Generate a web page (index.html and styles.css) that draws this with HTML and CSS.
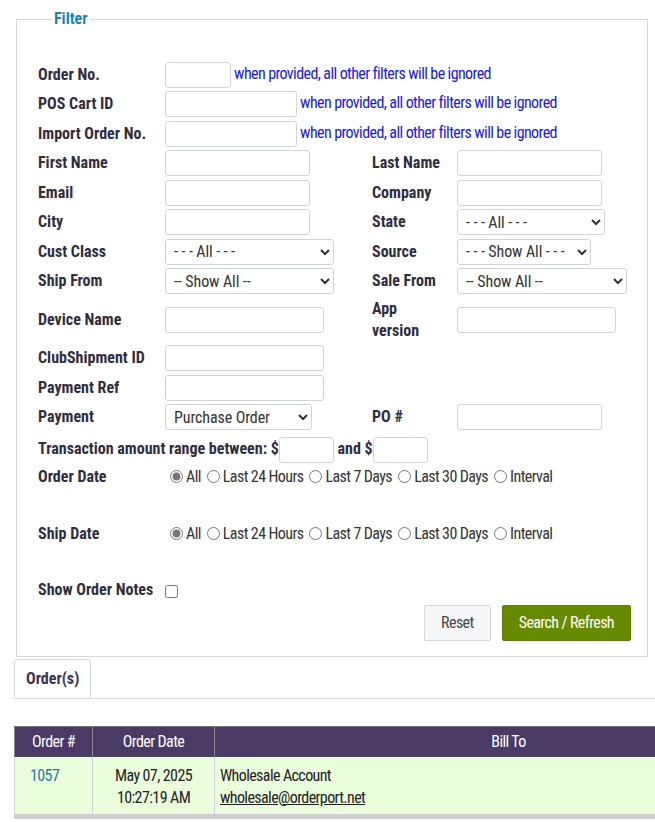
FILE: index.html
```html
<!DOCTYPE html>
<html>
<head>
  <link rel="stylesheet" href="styles.css">
</head>
<body>
  <div class="page">
    <fieldset class="filter">
      <legend>Filter</legend>
      <table class="filter-table">
        <tr>
          <th class="col-label">Order No.</th>
          <td colspan="3"><input type="text" class="w-66"> <span class="hint">when provided, all other filters will be ignored</span></td>
        </tr>
        <tr>
          <th>POS Cart ID</th>
          <td colspan="3"><input type="text" class="w-132"> <span class="hint">when provided, all other filters will be ignored</span></td>
        </tr>
        <tr>
          <th>Import Order No.</th>
          <td colspan="3"><input type="text" class="w-132"> <span class="hint">when provided, all other filters will be ignored</span></td>
        </tr>
        <tr>
          <th>First Name</th>
          <td class="col-field"><input type="text" class="w-145"></td>
          <th class="col-label2">Last Name</th>
          <td><input type="text" class="w-145"></td>
        </tr>
        <tr>
          <th>Email</th>
          <td><input type="text" class="w-145"></td>
          <th>Company</th>
          <td><input type="text" class="w-145"></td>
        </tr>
        <tr>
          <th>City</th>
          <td><input type="text" class="w-145"></td>
          <th>State</th>
          <td><select class="w-148"><option>- - - All - - -</option></select></td>
        </tr>
        <tr>
          <th>Cust Class</th>
          <td><select class="w-169"><option>- - - All - - -</option></select></td>
          <th>Source</th>
          <td><select class="w-134"><option>- - - Show All - - -</option></select></td>
        </tr>
        <tr>
          <th>Ship From</th>
          <td><select class="w-169"><option>-- Show All --</option></select></td>
          <th>Sale From</th>
          <td><select class="w-170"><option>-- Show All --</option></select></td>
        </tr>
        <tr>
          <th>Device Name</th>
          <td><input type="text" class="w-159"></td>
          <th>App<br>version</th>
          <td><input type="text" class="w-159"></td>
        </tr>
        <tr>
          <th>ClubShipment ID</th>
          <td colspan="3"><input type="text" class="w-159"></td>
        </tr>
        <tr>
          <th>Payment Ref</th>
          <td colspan="3"><input type="text" class="w-159"></td>
        </tr>
        <tr>
          <th>Payment</th>
          <td><select class="w-147"><option>Purchase Order</option></select></td>
          <th>PO #</th>
          <td><input type="text" class="w-145"></td>
        </tr>
        <tr class="row-amount">
          <th colspan="4">Transaction amount range between: $<input type="text" class="w-55">&nbsp;and $<input type="text" class="w-55"></th>
        </tr>
        <tr class="row-date">
          <th>Order Date</th>
          <td colspan="3">
            <label><input type="radio" name="odate" checked>All</label>
            <label><input type="radio" name="odate">Last 24 Hours</label>
            <label><input type="radio" name="odate">Last 7 Days</label>
            <label><input type="radio" name="odate">Last 30 Days</label>
            <label><input type="radio" name="odate">Interval</label>
          </td>
        </tr>
        <tr class="row-date">
          <th>Ship Date</th>
          <td colspan="3">
            <label><input type="radio" name="sdate" checked>All</label>
            <label><input type="radio" name="sdate">Last 24 Hours</label>
            <label><input type="radio" name="sdate">Last 7 Days</label>
            <label><input type="radio" name="sdate">Last 30 Days</label>
            <label><input type="radio" name="sdate">Interval</label>
          </td>
        </tr>
        <tr>
          <th>Show Order Notes</th>
          <td colspan="3"><input type="checkbox" class="notes-check"></td>
        </tr>
        <tr class="row-actions">
          <td colspan="4">
            <button class="btn btn-reset">Reset</button>
            <button class="btn btn-search">Search / Refresh</button>
          </td>
        </tr>
      </table>
    </fieldset>

    <div class="tabs">
      <span class="tab active">Order(s)</span>
    </div>

    <div class="grid-wrap">
      <table class="orders">
        <thead>
          <tr>
            <th class="c-num">Order #</th>
            <th class="c-date">Order Date</th>
            <th class="c-bill">Bill To</th>
          </tr>
        </thead>
        <tbody>
          <tr>
            <td class="c-num"><a href="#">1057</a></td>
            <td class="c-date">May 07, 2025<br>10:27:19 AM</td>
            <td class="c-bill">Wholesale Account<br><a href="#" class="mail">wholesale@orderport.net</a></td>
          </tr>
        </tbody>
      </table>
    </div>
  </div>
</body>
</html>
```

FILE: styles.css
```css
body {
  margin: 0;
  font-family: Roboto, "Liberation Sans", sans-serif;
  font-stretch: 75%;
  font-size: 16px;
  line-height: 22px;
  letter-spacing: -0.6px;
  color: #333;
}

.page {
  padding: 8px 0 0 0;
  overflow: hidden;
}

.filter {
  margin: 0 7px 0 16px;
  padding: 30px 16px 13px 21px;
  border: 1px solid #d3d7e0;
}

.filter legend {
  margin-left: 14px;
  padding: 0 2px;
  color: #1485b6;
  font-weight: bold;
  letter-spacing: 0;
}

.filter-table {
  width: 100%;
  border-collapse: collapse;
}

.filter-table th,
.filter-table td {
  padding: 1.75px 0;
  text-align: left;
  vertical-align: middle;
}

.filter-table th {
  color: #302d40;
  font-weight: bold;
  letter-spacing: 0;
}

.col-label { width: 127px; }
.col-field { width: 207px; }
.col-label2 { width: 85px; }

.filter-table input[type="text"],
.filter-table select {
  box-sizing: border-box;
  height: 26px;
  border: 1px solid #cfd4dc;
  border-radius: 3px;
  background: #fff;
  font: inherit;
  letter-spacing: -0.1px;
  color: #333;
  vertical-align: middle;
}

.filter-table select {
  padding: 0 4px;
}

.w-55 { width: 55px; }
.w-66 { width: 66px; }
.w-132 { width: 132px; }
.w-134 { width: 134px; }
.w-145 { width: 145px; }
.w-147 { width: 147px; }
.w-148 { width: 148px; }
.w-159 { width: 159px; }
.w-169 { width: 169px; }
.w-170 { width: 170px; }

.hint {
  color: #1616ee;
  font-weight: normal;
  letter-spacing: -0.6px;
}

.filter-table .row-amount th {
  padding: 5px 0 1px;
}

.filter-table .row-date th,
.filter-table .row-date td {
  vertical-align: top;
  padding-bottom: 33px;
}

.row-date label {
  color: #333;
}

.row-date input[type="radio"] {
  margin: 3px 3px 0 3px;
  accent-color: #777;
  vertical-align: -1px;
}

.row-date label:first-child input[type="radio"] {
  margin-left: 5px;
}

.notes-check {
  margin: 0;
  vertical-align: middle;
}

.row-actions td {
  text-align: right;
  padding-top: 2px;
}

.btn {
  height: 36px;
  padding: 0 16px;
  border: 1px solid #d3d6dc;
  border-radius: 2px;
  font: inherit;
  letter-spacing: -0.6px;
  cursor: pointer;
}

.btn-reset {
  background: #f7f8fa;
  color: #444;
  margin-right: 8px;
}

.btn-search {
  background: #678b00;
  border-color: #5d7d00;
  color: #fff;
}

.tabs {
  margin: 2px 0 0 14px;
  border-bottom: 1px solid #d3d7e0;
  height: 39px;
}

.tab {
  display: inline-block;
  height: 39px;
  box-sizing: border-box;
  padding: 8px 11px 0;
  border: 1px solid #d3d7e0;
  border-bottom: 1px solid #fff;
  border-radius: 4px 4px 0 0;
  background: #fff;
  color: #3a3357;
  font-weight: bold;
  letter-spacing: 0;
}

.grid-wrap {
  margin: 27px 0 0 14px;
  overflow: hidden;
}

.orders {
  width: 788px;
  border-collapse: collapse;
  border-bottom: 5px solid #cfcfcf;
}

.orders th {
  height: 30px;
  padding: 0;
  background: #4a3a66;
  color: #fff;
  font-weight: normal;
  text-align: center;
  border-top: 1px solid #777;
  border-left: 1px solid #8a8a8a;
}

.orders td {
  height: 60px;
  box-sizing: border-box;
  padding: 8px 5px 4px;
  background: #ebfedb;
  vertical-align: top;
  border-left: 1px solid #cfd4dc;
  color: #222;
}

.c-num { width: 77px; }
.c-date { width: 121px; }

.orders td.c-num {
  padding-left: 15px;
}

.orders td.c-date {
  text-align: center;
}

.orders a {
  color: #1a7fa8;
  text-decoration: none;
}

.orders a.mail {
  color: #222;
  text-decoration: underline;
}
```
